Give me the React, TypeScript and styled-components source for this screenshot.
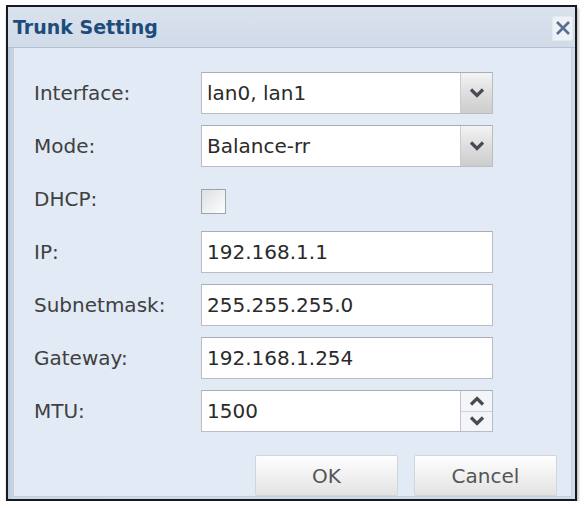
import React from 'react'
import styled, { createGlobalStyle } from 'styled-components'

const GlobalStyle = createGlobalStyle`
  html, body {
    margin: 0;
    padding: 0;
    background: #ffffff;
  }
  body {
    font-family: 'DejaVu Sans', Verdana, sans-serif;
  }
`

const Page = styled.div`
  padding: 5px 0 0 6px;
`

const Dialog = styled.div`
  box-sizing: border-box;
  width: 571px;
  height: 496px;
  display: flex;
  flex-direction: column;
  border: 2px solid #161a1e;
  background: linear-gradient(90deg, #b9c9de 0px, #cad7e6 5px, #cfdbe8 100%);
  padding: 0 3px 2px 5px;
  box-shadow: 1px 3px 3px rgba(0, 0, 0, 0.35);
`

const TitleBar = styled.div`
  height: 45px;
  display: flex;
  align-items: center;
  justify-content: space-between;
  margin-left: -5px;
  margin-right: -3px;
  padding: 0 2px 0 5px;
  background: linear-gradient(180deg, #d9e2ed 0%, #d1dbe8 100%);
  border-bottom: 1px solid #b3c1d1;
`

const Title = styled.h1`
  margin: 0;
  font-size: 19px;
  font-weight: bold;
  color: #1d4c7c;
`

const CloseButton = styled.button`
  box-sizing: border-box;
  width: 21px;
  height: 25px;
  margin-top: 2px;
  padding: 0;
  display: flex;
  align-items: center;
  justify-content: center;
  border: 1px solid #e3e9f0;
  border-radius: 2px;
  background: #eef2f7;
`

const Panel = styled.div`
  flex: 1;
  box-sizing: border-box;
  background: #e1eaf5;
  border: 1px solid #c2cfde;
  border-top: none;
  padding: 24px 14px 0 20px;
  display: flex;
  flex-direction: column;
`

const Form = styled.div`
  display: grid;
  grid-template-columns: 167px 292px;
  grid-auto-rows: 42px;
  row-gap: 11px;
  align-items: center;
`

const Label = styled.label`
  font-size: 20px;
  color: #404040;
`

const Field = styled.div`
  box-sizing: border-box;
  height: 42px;
  display: flex;
  align-items: stretch;
  background: #ffffff;
  border: 1px solid #b9bec5;
  border-top-color: #a8aeb6;
`

const FieldText = styled.div`
  flex: 1;
  display: flex;
  align-items: center;
  padding-left: 5px;
  font-size: 20px;
  color: #2a2a2a;
`

const DropButton = styled.div`
  flex: 0 0 31px;
  display: flex;
  align-items: center;
  justify-content: center;
  border-left: 1px solid #c9ccd0;
  background: linear-gradient(180deg, #f4f4f4 0%, #dcdcdc 55%, #cdcdcd 100%);
`

const Spinner = styled.div`
  flex: 0 0 31px;
  display: flex;
  flex-direction: column;
  border-left: 1px solid #c2c6cc;
  background: #f3f5f8;
`

const SpinHalf = styled.div<{ $top?: boolean }>`
  flex: 1;
  display: flex;
  align-items: center;
  justify-content: center;
  border-bottom: ${({ $top }) => ($top ? '1px solid #cfd4da' : 'none')};
`

const Check = styled.div`
  box-sizing: border-box;
  width: 25px;
  height: 25px;
  margin-top: 5px;
  border: 1px solid #9ea3a9;
  background: linear-gradient(135deg, #dcdfe3 0%, #f4f5f6 70%, #ffffff 100%);
`

const Buttons = styled.div`
  display: flex;
  justify-content: flex-end;
  gap: 16px;
  margin-top: 23px;
`

const Button = styled.button`
  box-sizing: border-box;
  width: 143px;
  height: 41px;
  border: 1px solid #d2d5d9;
  border-radius: 2px;
  background: linear-gradient(180deg, #fefefe 0%, #f2f2f2 45%, #e3e3e3 100%);
  font-family: 'DejaVu Sans', Verdana, sans-serif;
  font-size: 20px;
  color: #555555;
  padding: 0;
`

const ChevronSvg = styled.svg`
  flex: none;
  display: block;
`

const Chevron = ({ up }: { up?: boolean }) => (
  <ChevronSvg width="16" height="10" viewBox="0 0 16 10">
    <path
      d={up ? 'M2 8.5 L8 2.5 L14 8.5' : 'M2 1.5 L8 7.5 L14 1.5'}
      fill="none"
      stroke="#474c54"
      strokeWidth="3.2"
    />
  </ChevronSvg>
)

const CloseIcon = () => (
  <ChevronSvg width="16" height="16" viewBox="0 0 16 16">
    <path d="M2 2 L14 14 M14 2 L2 14" stroke="#56708f" strokeWidth="2.6" />
  </ChevronSvg>
)

const Select = ({ value }: { value: string }) => (
  <Field>
    <FieldText>{value}</FieldText>
    <DropButton>
      <Chevron />
    </DropButton>
  </Field>
)

const TextField = ({ value }: { value: string }) => (
  <Field>
    <FieldText>{value}</FieldText>
  </Field>
)

const NumberField = ({ value }: { value: string }) => (
  <Field>
    <FieldText>{value}</FieldText>
    <Spinner>
      <SpinHalf $top>
        <Chevron up />
      </SpinHalf>
      <SpinHalf>
        <Chevron />
      </SpinHalf>
    </Spinner>
  </Field>
)

export default function App() {
  return (
    <>
      <GlobalStyle />
      <Page>
        <Dialog>
          <TitleBar>
            <Title>Trunk Setting</Title>
            <CloseButton aria-label="Close">
              <CloseIcon />
            </CloseButton>
          </TitleBar>
          <Panel>
            <Form>
              <Label>Interface:</Label>
              <Select value="lan0, lan1" />
              <Label>Mode:</Label>
              <Select value="Balance-rr" />
              <Label>DHCP:</Label>
              <Check />
              <Label>IP:</Label>
              <TextField value="192.168.1.1" />
              <Label>Subnetmask:</Label>
              <TextField value="255.255.255.0" />
              <Label>Gateway:</Label>
              <TextField value="192.168.1.254" />
              <Label>MTU:</Label>
              <NumberField value="1500" />
            </Form>
            <Buttons>
              <Button>OK</Button>
              <Button>Cancel</Button>
            </Buttons>
          </Panel>
        </Dialog>
      </Page>
    </>
  )
}
